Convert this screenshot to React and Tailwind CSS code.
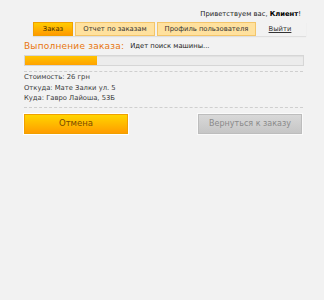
export default function App() {
  const f = { fontFamily: '"DejaVu Sans", Verdana, sans-serif' };
  return (
    <div className="w-[324px] h-[300px] bg-[#f2f2f2] text-[#333]" style={f}>
      <div className="flex justify-end pr-[23px] pt-[10px] h-[22px] text-[6.8px] leading-[9px] text-[#222]">
        <span>Приветствуем вас, <b className="text-black">Клиент</b>!</span>
      </div>
      <div className="ml-[33px] mr-[18px] flex items-end h-[14px] gap-[2px] shadow-[0_1px_1px_rgba(0,0,0,0.08)]">
        <div className="w-[40px] h-[14px] flex items-center justify-center text-[6.8px] text-[#4a3000] bg-gradient-to-b from-[#ffcc00] to-[#ff9900] border border-[#f0a000]">Заказ</div>
        <div className="w-[80px] h-[14px] flex items-center justify-center text-[6.8px] text-[#333] bg-[#ffe19e] border border-[#f3c56a]">Отчет по заказам</div>
        <div className="w-[99px] h-[14px] flex items-center justify-center text-[6.8px] text-[#333] bg-[#ffe19e] border border-[#f3c56a]">Профиль пользователя</div>
        <div className="w-[44px] h-[14px] flex items-center justify-center text-[6.8px] text-[#333] underline">Выйти</div>
      </div>
      <div className="mx-[24px] mt-[3px]">
        <div className="flex items-center h-[15px]">
          <span className="text-[9px] text-[#e8760e] tracking-[0.2px]">Выполнение заказа:</span>
          <span className="ml-[6px] text-[6.8px] text-[#222]">Идет поиск машины...</span>
        </div>
        <div className="mt-[1px] h-[11px] w-[280px] bg-[#ececec] border border-[#d6d6d6] shadow-[inset_0_1px_1px_rgba(0,0,0,0.05)]">
          <div className="h-full w-[72px] bg-gradient-to-b from-[#ffc400] to-[#ffa200]" />
        </div>
        <div className="mt-[5px] border-t border-dashed border-[#cfcfcf] w-[279px]" />
        <div className="pb-[3px] text-[6.8px] leading-[10.5px] text-[#3a3a3a]">
          <div>Стоимость: 26 грн</div>
          <div>Откуда: Мате Залки ул. 5</div>
          <div>Куда: Гавро Лайоша, 53Б</div>
        </div>
        <div className="border-t border-dashed border-[#cfcfcf] w-[279px]" />
        <div className="mt-[6px] flex justify-between w-[278px]">
          <button className="w-[104px] h-[20px] text-[8.5px] text-[#7a4a00] bg-gradient-to-b from-[#ffd500] to-[#ff9d00] border border-[#f0a000] shadow-[0_0_0_1px_#fff]">Отмена</button>
          <button className="w-[104px] h-[20px] text-[8px] text-[#8a8a8a] bg-gradient-to-b from-[#d8d8d8] to-[#c6c6c6] border border-[#bdbdbd] shadow-[0_0_0_1px_#fafafa]">Вернуться к заказу</button>
        </div>
      </div>
    </div>
  );
}
